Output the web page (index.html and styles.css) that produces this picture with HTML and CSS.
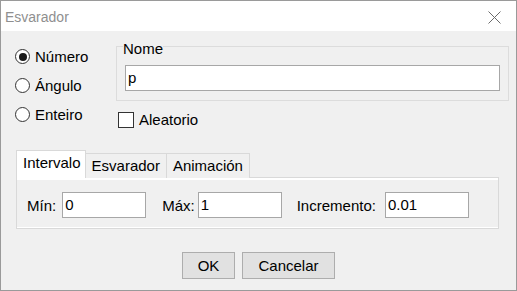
FILE: index.html
```html
<!DOCTYPE html>
<html>
<head>
<meta charset="utf-8">
<link rel="stylesheet" href="styles.css">
</head>
<body>
<div class="window">
  <div class="titlebar">
    <span class="title">Esvarador</span>
    <svg class="close" width="13" height="13" viewBox="0 0 13 13"><path d="M0.5 0.5 L12.5 12.5 M12.5 0.5 L0.5 12.5" stroke="#6b6b6b" stroke-width="1" fill="none"/></svg>
  </div>
  <div class="content">
    <div class="top">
      <div class="radios">
        <label class="radio"><span class="circle checked"></span><span>Número</span></label>
        <label class="radio"><span class="circle"></span><span>Ángulo</span></label>
        <label class="radio"><span class="circle"></span><span>Enteiro</span></label>
      </div>
      <div class="right">
        <fieldset class="group">
          <legend class="legend">Nome</legend>
          <div class="textbox name">p</div>
        </fieldset>
        <label class="check"><span class="box"></span><span>Aleatorio</span></label>
      </div>
    </div>
    <div class="tabs">
      <div class="tabstrip">
        <div class="tab active">Intervalo</div>
        <div class="tab">Esvarador</div>
        <div class="tab">Animación</div>
      </div>
      <div class="panel">
        <div class="panel-inner">
          <div class="field f1"><span>Mín:</span><div class="textbox small">0</div></div>
          <div class="field f2"><span>Máx:</span><div class="textbox small">1</div></div>
          <div class="field f3"><span>Incremento:</span><div class="textbox small">0.01</div></div>
        </div>
      </div>
    </div>
    <div class="buttons">
      <div class="btn ok">OK</div>
      <div class="btn cancel">Cancelar</div>
    </div>
  </div>
</div>
</body>
</html>
```
FILE: styles.css
```css
* { box-sizing: border-box; }
html, body { margin: 0; padding: 0; background: #fff; }
.window {
  width: 517px;
  height: 291px;
  border: 1px solid #9a9a9a;
  display: flex;
  flex-direction: column;
  font-family: "Liberation Sans", Arial, sans-serif;
  font-size: 15px;
  color: #000;
}
.titlebar {
  height: 30px;
  background: #fff;
  display: flex;
  align-items: center;
  justify-content: space-between;
  padding: 0 15px 0 4px;
  flex: none;
}
.title {
  font-family: "Liberation Sans", Arial, sans-serif;
  font-size: 14px;
  color: #8f8f8f;
  line-height: 16px;
  padding-top: 2px;
}
.close { display: block; margin-top: 2px; }
.content {
  flex: 1;
  background: #f0f0f0;
  display: flex;
  flex-direction: column;
}
.top {
  display: flex;
  align-items: flex-start;
  padding-left: 14px;
}
.radios {
  width: 101px;
  margin-top: 11px;
  display: flex;
  flex-direction: column;
}
.radio {
  height: 29px;
  display: flex;
  align-items: center;
  gap: 5px;
  line-height: 17px;
}
.circle {
  width: 15px;
  height: 15px;
  border: 1px solid #333;
  border-radius: 50%;
  background: #fff;
  display: flex;
  align-items: center;
  justify-content: center;
  flex: none;
}
.circle.checked::after {
  content: "";
  width: 8px;
  height: 8px;
  border-radius: 50%;
  background: #1a1a1a;
}
.right {
  width: 393px;
  margin-top: 5px;
}
.group {
  margin: 0;
  border: 1px solid #dcdcdc;
  padding: 0 8px 9px 8px;
}
.legend {
  padding: 4px 0 0 0;
  margin-left: -2px;
  line-height: 17px;
}
.textbox {
  background: #fff;
  border: 1px solid #a7a7a7;
  height: 26px;
  line-height: 24px;
  padding-left: 2px;
}
.name { margin-top: 8px; }
.check {
  margin-top: 10px;
  margin-left: 2px;
  display: flex;
  align-items: center;
  gap: 5px;
  line-height: 17px;
}
.box {
  width: 16px;
  height: 16px;
  border: 1px solid #333;
  background: #fff;
  flex: none;
}
.tabs {
  margin: 21px 17px 0 15px;
}
.tabstrip {
  display: flex;
  align-items: flex-end;
  position: relative;
  z-index: 1;
  margin-bottom: -1px;
}
.tab {
  height: 25px;
  border: 1px solid #d9d9d9;
  border-bottom: none;
  background: #f0f0f0;
  padding: 0 6px;
  line-height: 23px;
  margin-left: -1px;
}
.tab:first-child { margin-left: 0; }
.tab.active {
  height: 28px;
  background: #fff;
  line-height: 24px;
  padding: 0 4px 0 6px;
}
.panel {
  border: 1px solid #d9d9d9;
  background: #fff;
  height: 52px;
  padding: 2px 0 1px 0;
}
.panel-inner {
  height: 100%;
  background: #f0f0f0;
  display: flex;
  align-items: center;
  padding: 3px 0 0 10px;
}
.field {
  display: flex;
  align-items: center;
}
.small { width: 84px; }
.f1 span { margin-right: 6px; }
.f2 { margin-left: 16px; }
.f2 span { margin-right: 3px; }
.f3 { margin-left: 15px; }
.f3 span { margin-right: 9px; }
.buttons {
  margin-top: 23px;
  display: flex;
  justify-content: center;
  gap: 7px;
}
.btn {
  height: 27px;
  background: #e1e1e1;
  border: 1px solid #adadad;
  display: flex;
  align-items: center;
  justify-content: center;
}
.ok { width: 53px; }
.cancel { width: 93px; }
```
